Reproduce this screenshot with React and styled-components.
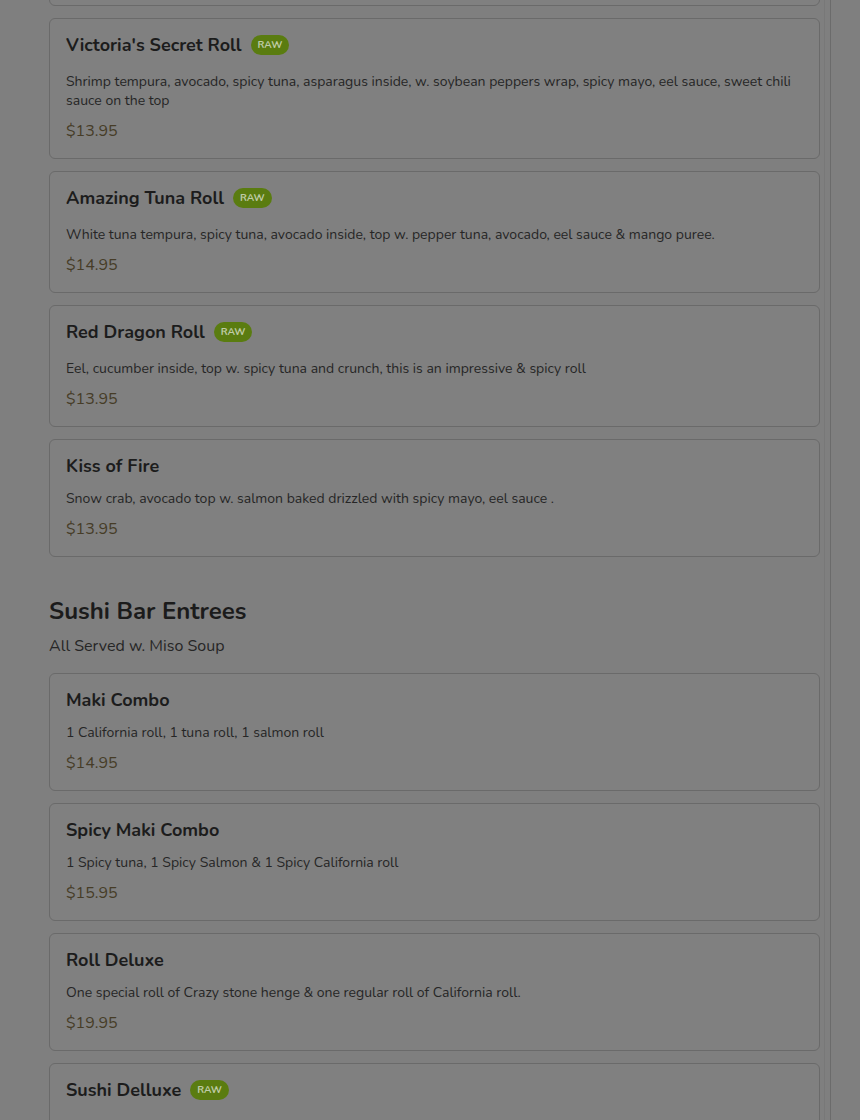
import React from "react";
import styled, { createGlobalStyle } from "styled-components";

const Global = createGlobalStyle`
  html, body { margin: 0; padding: 0; background: #7f7f7f; }
  body { font-family: "Nunito", "Lato", "Noto Sans", sans-serif; overflow: hidden; }
`;

const Main = styled.main`
  width: 831px;
  box-sizing: border-box;
  border-right: 1px solid #6b6b6b;
  padding-right: 5px;
  min-height: 1120px;
`;

const Inner = styled.div`
  box-sizing: border-box;
  border-right: 1px solid #787878;
  padding: 0 4px 0 49px;
  margin-top: -112px;
`;

const Section = styled.section`
  & + & { margin-top: 38px; }
`;

const Heading = styled.h2`
  margin: 0;
  font-size: 24px;
  line-height: 32px;
  font-weight: 700;
  color: #1b1b1b;
`;

const Sub = styled.p`
  margin: 8px 0 16px;
  font-size: 16px;
  line-height: 22px;
  color: #262626;
`;

const List = styled.div`
  display: flex;
  flex-direction: column;
  gap: 12px;
`;

const Card = styled.article`
  width: 771px;
  box-sizing: border-box;
  border: 1px solid #6a6a6a;
  border-radius: 6px;
  background: #808080;
  padding: 14px 16px 16px;
`;

const TitleRow = styled.div`
  display: flex;
  align-items: center;
  gap: 9px;
  height: 24px;
  margin-bottom: ${(p) => (p.$badge ? "15px" : "11px")};
`;

const Title = styled.h3`
  margin: 0;
  font-size: 18px;
  line-height: 24px;
  font-weight: 700;
  color: #1c1c1c;
`;

const Badge = styled.span`
  display: inline-flex;
  align-items: center;
  justify-content: center;
  height: 20px;
  padding: 0 7px;
  border-radius: 10px;
  background: #5a7c10;
  color: #bfcba6;
  font-size: 10px;
  font-weight: 700;
`;

const Desc = styled.p`
  margin: 0 0 10px;
  font-size: 14px;
  line-height: 19px;
  color: #262626;
`;

const Price = styled.div`
  font-size: 16px;
  line-height: 22px;
  color: #463c27;
`;

const before = [
  { name: "Crazy Stone Henge", desc: "Spicy tuna, cucumber inside, top w. salmon, tuna, yellowtail.", price: "$13.95" },
];

const rolls = [
  {
    name: "Victoria's Secret Roll",
    desc: "Shrimp tempura, avocado, spicy tuna, asparagus inside, w. soybean peppers wrap, spicy mayo, eel sauce, sweet chili sauce on the top",
    price: "$13.95",
    raw: true,
  },
  {
    name: "Amazing Tuna Roll",
    desc: "White tuna tempura, spicy tuna, avocado inside, top w. pepper tuna, avocado, eel sauce & mango puree.",
    price: "$14.95",
    raw: true,
  },
  {
    name: "Red Dragon Roll",
    desc: "Eel, cucumber inside, top w. spicy tuna and crunch, this is an impressive & spicy roll",
    price: "$13.95",
    raw: true,
  },
  {
    name: "Kiss of Fire",
    desc: "Snow crab, avocado top w. salmon baked drizzled with spicy mayo, eel sauce .",
    price: "$13.95",
  },
];

const entrees = [
  { name: "Maki Combo", desc: "1 California roll, 1 tuna roll, 1 salmon roll", price: "$14.95" },
  { name: "Spicy Maki Combo", desc: "1 Spicy tuna, 1 Spicy Salmon & 1 Spicy California roll", price: "$15.95" },
  { name: "Roll Deluxe", desc: "One special roll of Crazy stone henge & one regular roll of California roll.", price: "$19.95" },
  { name: "Sushi Delluxe", desc: "9 pieces of sushi & 1 California roll", price: "$24.95", raw: true },
];

function Item({ item }) {
  return (
    <Card>
      <TitleRow $badge={item.raw}>
        <Title>{item.name}</Title>
        {item.raw && <Badge>RAW</Badge>}
      </TitleRow>
      <Desc>{item.desc}</Desc>
      <Price>{item.price}</Price>
    </Card>
  );
}

export default function App() {
  return (
    <>
      <Global />
      <Main>
        <Inner>
          <Section>
            <List>
              {[...before, ...rolls].map((it) => (
                <Item key={it.name} item={it} />
              ))}
            </List>
          </Section>
          <Section>
            <Heading>Sushi Bar Entrees</Heading>
            <Sub>All Served w. Miso Soup</Sub>
            <List>
              {entrees.map((it) => (
                <Item key={it.name} item={it} />
              ))}
            </List>
          </Section>
        </Inner>
      </Main>
    </>
  );
}
